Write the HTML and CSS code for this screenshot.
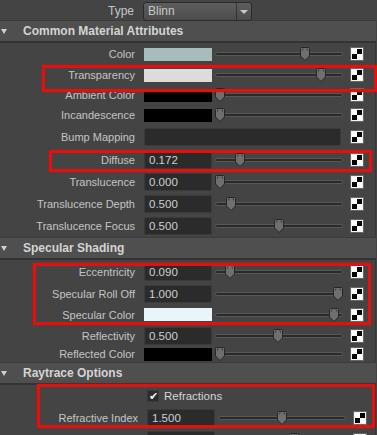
FILE: index.html
```html
<html>
<head>
<title>Blinn attributes</title>
<link rel="stylesheet" href="styles.css">
</head>
<body>

<svg class="defs" width="0" height="0">
  <symbol id="thumb" viewBox="0 0 10 14">
    <path d="M1.5 0.5 H8.5 Q9.5 0.5 9.5 1.5 V9 L5 13.5 L0.5 9 V1.5 Q0.5 0.5 1.5 0.5 Z" fill="#6f6f6f" stroke="#262626"/>
    <path d="M2.5 2 V3.5 M7.5 2 V3.5 M2.5 2 H3.5 M7.5 2 H6.5" stroke="#3a3a3a"/>
  </symbol>
</svg>

<div class="editor">

<div class="type-row">
  <span class="lbl">Type</span>
  <div class="combo"><span class="combo-text">Blinn</span><span class="combo-btn"></span></div>
</div>

<!-- common -->
<div class="head"><span class="tri"></span>Common Material Attributes</div>
<div class="body">
  <div class="row h22"><label>Color</label><div class="swatch" style="background:#a9bcbc"></div><div class="slider"><svg class="thumb" style="left:84px"><use href="#thumb"/></svg></div><div class="map"></div></div>
  <div class="row h20"><label>Transparency</label><div class="swatch" style="background:#dcdcdc"></div><div class="slider"><svg class="thumb" style="left:100px"><use href="#thumb"/></svg></div><div class="map"></div></div>
  <div class="row h20"><label>Ambient Color</label><div class="swatch" style="background:#000"></div><div class="slider"><svg class="thumb" style="left:-1px"><use href="#thumb"/></svg></div><div class="map"></div></div>
  <div class="row h20"><label>Incandescence</label><div class="swatch" style="background:#000"></div><div class="slider"><svg class="thumb" style="left:-1px"><use href="#thumb"/></svg></div><div class="map"></div></div>
  <div class="row h24"><label>Bump Mapping</label><div class="bump"></div><div class="map wide"></div></div>
  <div class="row h22"><label>Diffuse</label><div class="num">0.172</div><div class="slider"><svg class="thumb" style="left:19px"><use href="#thumb"/></svg></div><div class="map"></div></div>
  <div class="row h22"><label>Translucence</label><div class="num">0.000</div><div class="slider"><svg class="thumb" style="left:-1px"><use href="#thumb"/></svg></div><div class="map"></div></div>
  <div class="row h22"><label>Translucence Depth</label><div class="num">0.500</div><div class="slider"><svg class="thumb" style="left:10px"><use href="#thumb"/></svg></div><div class="map"></div></div>
  <div class="row h22"><label>Translucence Focus</label><div class="num">0.500</div><div class="slider"><svg class="thumb" style="left:58px"><use href="#thumb"/></svg></div><div class="map"></div></div>
</div>

<!-- specular -->
<div class="head"><span class="tri"></span>Specular Shading</div>
<div class="body">
  <div class="row h23"><label>Eccentricity</label><div class="num">0.090</div><div class="slider"><svg class="thumb" style="left:9px"><use href="#thumb"/></svg></div><div class="map"></div></div>
  <div class="row h21"><label>Specular Roll Off</label><div class="num">1.000</div><div class="slider"><svg class="thumb" style="left:117px"><use href="#thumb"/></svg></div><div class="map"></div></div>
  <div class="row h21"><label>Specular Color</label><div class="swatch" style="background:#eaf5fa"></div><div class="slider"><svg class="thumb" style="left:113px"><use href="#thumb"/></svg></div><div class="map"></div></div>
  <div class="row h21"><label>Reflectivity</label><div class="num">0.500</div><div class="slider"><svg class="thumb" style="left:57px"><use href="#thumb"/></svg></div><div class="map"></div></div>
  <div class="row h16"><label>Reflected Color</label><div class="swatch" style="background:#000"></div><div class="slider"><svg class="thumb" style="left:-1px"><use href="#thumb"/></svg></div><div class="map"></div></div>
</div>

<!-- raytrace -->
<div class="head"><span class="tri"></span>Raytrace Options</div>
<div class="body shifted">
  <div class="row h22"><span class="check">&#10004;</span><span class="check-lbl">Refractions</span></div>
  <div class="row h22"><label>Refractive Index</label><div class="num">1.500</div><div class="slider"><svg class="thumb" style="left:58px"><use href="#thumb"/></svg></div><div class="map"></div></div>
  <div class="row h22"><label>Refraction Limit</label><div class="num">6</div><div class="slider"><svg class="thumb" style="left:70px"><use href="#thumb"/></svg></div><div class="map"></div></div>
</div>

</div>

<!-- red annotation boxes -->
<div class="mark" style="left:42px;top:65px;width:335px;height:27px"></div>
<div class="mark" style="left:49px;top:150px;width:323px;height:22px"></div>
<div class="mark" style="left:33px;top:263px;width:338px;height:62px"></div>
<div class="mark" style="left:37px;top:384px;width:338px;height:44px"></div>

</body>
</html>
```

FILE: styles.css
```css
body{margin:0;background:#444;font-family:"Liberation Sans",Arial,sans-serif;font-size:11px;color:#c4c4c4;width:377px;height:435px;overflow:hidden;position:relative;}
.defs{position:absolute;}
.editor{width:376px;}

.type-row{height:20px;display:flex;align-items:flex-start;}
.type-row .lbl{width:134px;text-align:right;margin-right:9px;font-size:12px;line-height:22px;}
.combo{width:109px;height:19px;margin-top:2px;box-sizing:border-box;border:1px solid #2a2a2a;border-radius:3px;background:linear-gradient(#5d5d5d,#4c4c4c);display:flex;}
.combo-text{flex:1;padding-left:4px;line-height:17px;font-size:12px;color:#c8c8c8;}
.combo-btn{width:14px;border-left:1px solid #333;position:relative;}
.combo-btn:after{content:"";position:absolute;left:3px;top:7px;border-left:4px solid transparent;border-right:4px solid transparent;border-top:4px solid #c8c8c8;}

.head{height:20px;border-top:1px solid #3b3b3b;border-bottom:2px solid #333;background:#4f4f4f;display:flex;align-items:center;font-weight:bold;font-size:12px;color:#d4d4d4;}
.tri{width:0;height:0;margin-left:1px;margin-right:16px;border-left:3.5px solid transparent;border-right:3.5px solid transparent;border-top:5px solid #cfcfcf;}

.body{border-right:1px solid #383838;}
.body.shifted{padding-left:3px;}
.row{display:flex;align-items:center;}
.h16{height:16px;}
.h20{height:20px;}
.h21{height:21px;}
.h22{height:22px;}
.h23{height:23px;}
.h24{height:24px;}
.row label{width:135px;text-align:right;margin-right:9px;white-space:nowrap;font-size:11px;}

.swatch{width:68px;height:13px;flex:none;}
.num{width:68px;height:18px;flex:none;box-sizing:border-box;background:#2b2b2b;border:1px solid #3a3a3a;border-radius:2px;padding-left:4px;line-height:17px;font-size:11.5px;color:#d0d0d0;}
.bump{width:197px;height:18px;flex:none;box-sizing:border-box;background:#2b2b2b;border:1px solid #3a3a3a;border-radius:2px;}

.slider{margin-left:3px;width:128px;height:4px;flex:none;box-sizing:border-box;background:#2a2a2a;border:1px solid #585858;border-radius:3px;position:relative;}
.thumb{position:absolute;top:-6px;width:10px;height:14px;}

.map{margin-left:8px;width:10px;height:10px;flex:none;border:1px solid #f2f2f2;outline:1px solid #666;background:conic-gradient(#000 0 25%,#fff 0 50%,#000 0 75%,#fff 0);}
.map.wide{margin-left:10px;}

.check{margin-left:144px;width:12px;height:12px;box-sizing:border-box;background:#2b2b2b;border:1px solid #3a3a3a;color:#eee;font-size:11px;line-height:11px;text-align:center;}
.check-lbl{margin-left:5px;color:#d4d4d4;font-size:11.5px;}

.mark{position:absolute;box-sizing:border-box;border:3px solid #e2100e;box-shadow:0 0 2px rgba(226,16,14,.6);}
```
